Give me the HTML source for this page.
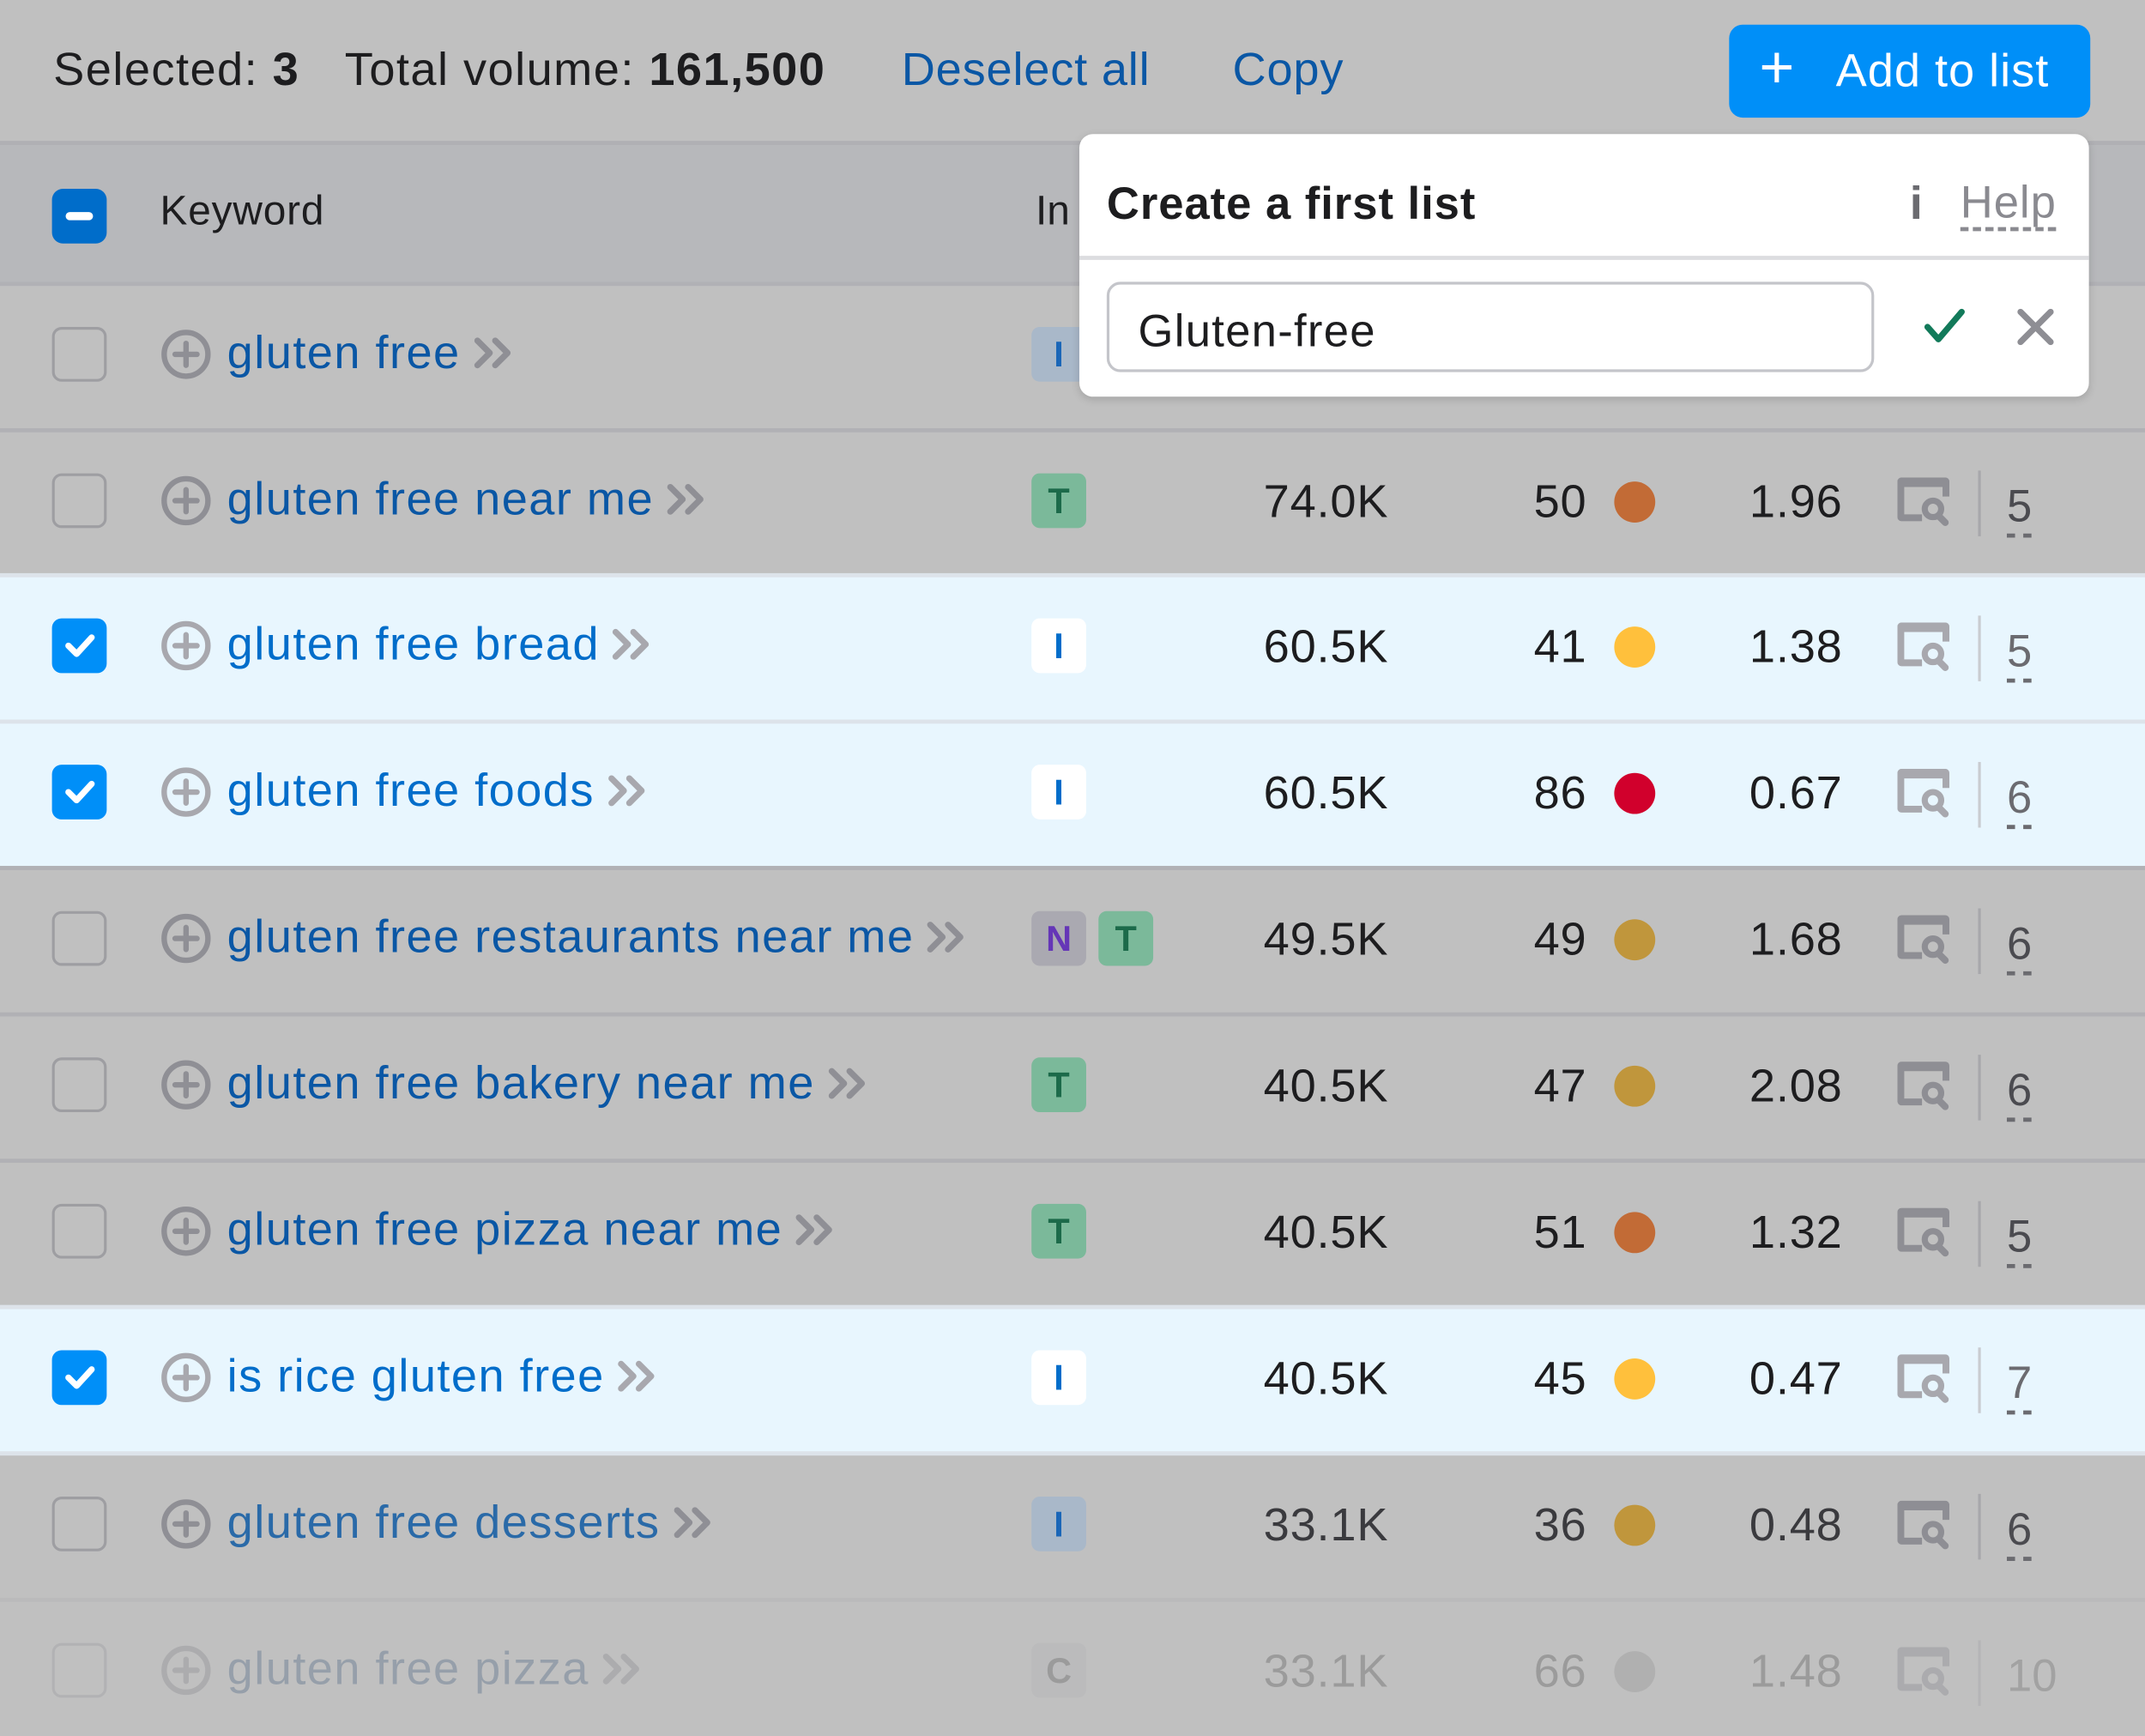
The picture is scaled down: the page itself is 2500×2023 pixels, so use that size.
<!DOCTYPE html>
<html><head><meta charset="utf-8"><style>
*{margin:0;padding:0;box-sizing:border-box}
html,body{width:2500px;height:2023px;overflow:hidden;background:#c0c0c0}
#w{position:absolute;left:0;top:0;width:1568px;height:1269px;transform:scale(1.59439,1.59417);transform-origin:0 0;background:#c0c0c0;font-family:"Liberation Sans",sans-serif;overflow:hidden}
.a{position:absolute}
.row{position:absolute;left:0;width:1568px;height:107px;border-top:3px solid #b1b1b5}
.sel{background:#e8f6fe;border-top:3px solid #dde3ea}
.cb{position:absolute;left:38px;top:30px;width:40px;height:40px;border:2px solid #9e9ea2;border-radius:7px}
.sel .cb{background:#008ff8;border-color:#008ff8}
.plus{position:absolute;left:117px;top:31px}
.kw{position:absolute;left:166px;top:30px;font-size:34px;letter-spacing:0.9px;color:#0a57a5;white-space:nowrap}
.sel .kw{color:#006dca}
.kw svg{margin-left:8px;vertical-align:-2px}
.bd{position:absolute;top:30px;width:40px;height:40px;border-radius:6px;font-size:26px;font-weight:bold;text-align:center;line-height:40px}
.T{background:#7bb99a;color:#1c6a4a}
.N{background:#aaa9b1;color:#6536b7}
.I{background:#a9b8c9;color:#1a66b8}
.sel .I{background:#fff;color:#006dca}
.vol,.kd,.cpc{position:absolute;top:32px;font-size:34px;letter-spacing:0.5px;color:#1d1d1f;text-align:right}
.vol{left:880px;width:135px}.kd{left:1060px;width:100px}.cpc{left:1230px;width:117px}
.dot{position:absolute;left:1180px;top:36px;width:30px;height:30px;border-radius:50%}
.serp{position:absolute;left:1387px;top:33px}
.sep{position:absolute;left:1446px;top:28px;width:2px;height:48px;background:#a7a7ab}
.sel .sep{background:#c9ccd1}
.num{position:absolute;left:1467px;top:36px;font-size:33px;color:#4b4b50;border-bottom:3px dashed #6b6b70;line-height:36px;padding-bottom:2px}
</style></head><body><div id="w">

<div class="a" style="left:39px;top:32px;font-size:34px;letter-spacing:0.9px;color:#1d1d1f;white-space:nowrap">Selected: <b>3</b></div>
<div class="a" style="left:252px;top:32px;font-size:34px;letter-spacing:0.9px;color:#1d1d1f;white-space:nowrap">Total volume: <b>161,500</b></div>
<div class="a" style="left:659px;top:32px;font-size:34px;letter-spacing:0.5px;color:#0a57a5">Deselect all</div>
<div class="a" style="left:901px;top:32px;font-size:34px;letter-spacing:0.5px;color:#0a57a5">Copy</div>
<div class="a" style="left:1264px;top:18px;width:264px;height:68px;background:#008ff8;border-radius:10px;color:#fff;font-size:34px;line-height:68px;white-space:nowrap"><span style="position:absolute;left:22px;top:-2px;font-size:44px">+</span><span style="position:absolute;left:78px;letter-spacing:0.6px">Add to list</span></div>

<div class="a" style="left:0;top:103px;width:1568px;height:104px;background:#b7b8bb;border-top:3px solid #b0b0b4"></div>
<div class="a" style="left:38px;top:138px;width:40px;height:40px;background:#006dca;border-radius:8px"><div class="a" style="left:10px;top:17px;width:20px;height:6px;background:#fff;border-radius:3px"></div></div>
<div class="a" style="left:117px;top:138px;font-size:30px;letter-spacing:0.5px;color:#1d1d1f">Keyword</div>
<div class="a" style="left:757px;top:138px;font-size:30px;color:#1d1d1f">In</div>

<!-- rows -->
<div class="row" style="top:206px"><div class="cb"></div><svg class="plus" width="38" height="38" viewBox="0 0 38 38"><circle cx="19" cy="19" r="16" fill="none" stroke="#8f8f95" stroke-width="4"/><path d="M19 11v16M11 19h16" stroke="#8f8f95" stroke-width="4" stroke-linecap="round"/></svg><div class="kw">gluten free<svg width="32" height="26" viewBox="0 0 32 26"><path d="M4 4l9 9-9 9M17 4l9 9-9 9" fill="none" stroke="#8f8f95" stroke-width="4.5" stroke-linecap="round" stroke-linejoin="round"/></svg></div><div class="bd I" style="left:754px">I</div></div>

<div class="row" style="top:313px"><div class="cb"></div><svg class="plus" width="38" height="38" viewBox="0 0 38 38"><circle cx="19" cy="19" r="16" fill="none" stroke="#8f8f95" stroke-width="4"/><path d="M19 11v16M11 19h16" stroke="#8f8f95" stroke-width="4" stroke-linecap="round"/></svg><div class="kw">gluten free near me<svg width="32" height="26" viewBox="0 0 32 26"><path d="M4 4l9 9-9 9M17 4l9 9-9 9" fill="none" stroke="#8f8f95" stroke-width="4.5" stroke-linecap="round" stroke-linejoin="round"/></svg></div><div class="bd T" style="left:754px">T</div><div class="vol">74.0K</div><div class="kd">50</div><div class="dot" style="background:#c26b36"></div><div class="cpc">1.96</div><svg class="serp" width="40" height="36" viewBox="0 0 40 36"><path d="M3 0h32a3 3 0 0 1 3 3v11h-5V7H5v20h13v5H3a3 3 0 0 1-3-3V3a3 3 0 0 1 3-3z" fill="#8e8e94"/><circle cx="26" cy="23" r="6" fill="none" stroke="#8e8e94" stroke-width="4.5"/><path d="M30 28l5 5" stroke="#8e8e94" stroke-width="5" stroke-linecap="round"/></svg><div class="sep"></div><div class="num">5</div></div>

<div class="row sel" style="top:419px"><div class="cb"><svg width="36" height="36" viewBox="0 0 36 36" style="position:absolute;left:0;top:0"><path d="M10 18l6 6 11-12" fill="none" stroke="#fff" stroke-width="4.5" stroke-linecap="round" stroke-linejoin="round"/></svg></div><svg class="plus" width="38" height="38" viewBox="0 0 38 38"><circle cx="19" cy="19" r="16" fill="none" stroke="#a8a8ae" stroke-width="4"/><path d="M19 11v16M11 19h16" stroke="#a8a8ae" stroke-width="4" stroke-linecap="round"/></svg><div class="kw">gluten free bread<svg width="32" height="26" viewBox="0 0 32 26"><path d="M4 4l9 9-9 9M17 4l9 9-9 9" fill="none" stroke="#a8a8ae" stroke-width="4.5" stroke-linecap="round" stroke-linejoin="round"/></svg></div><div class="bd I" style="left:754px">I</div><div class="vol">60.5K</div><div class="kd">41</div><div class="dot" style="background:#ffc03c"></div><div class="cpc">1.38</div><svg class="serp" width="40" height="36" viewBox="0 0 40 36"><path d="M3 0h32a3 3 0 0 1 3 3v11h-5V7H5v20h13v5H3a3 3 0 0 1-3-3V3a3 3 0 0 1 3-3z" fill="#a8a8ae"/><circle cx="26" cy="23" r="6" fill="none" stroke="#a8a8ae" stroke-width="4.5"/><path d="M30 28l5 5" stroke="#a8a8ae" stroke-width="5" stroke-linecap="round"/></svg><div class="sep"></div><div class="num" style="color:#6b6b70">5</div></div>

<div class="row sel" style="top:526px"><div class="cb"><svg width="36" height="36" viewBox="0 0 36 36" style="position:absolute;left:0;top:0"><path d="M10 18l6 6 11-12" fill="none" stroke="#fff" stroke-width="4.5" stroke-linecap="round" stroke-linejoin="round"/></svg></div><svg class="plus" width="38" height="38" viewBox="0 0 38 38"><circle cx="19" cy="19" r="16" fill="none" stroke="#a8a8ae" stroke-width="4"/><path d="M19 11v16M11 19h16" stroke="#a8a8ae" stroke-width="4" stroke-linecap="round"/></svg><div class="kw">gluten free foods<svg width="32" height="26" viewBox="0 0 32 26"><path d="M4 4l9 9-9 9M17 4l9 9-9 9" fill="none" stroke="#a8a8ae" stroke-width="4.5" stroke-linecap="round" stroke-linejoin="round"/></svg></div><div class="bd I" style="left:754px">I</div><div class="vol">60.5K</div><div class="kd">86</div><div class="dot" style="background:#d1002c"></div><div class="cpc">0.67</div><svg class="serp" width="40" height="36" viewBox="0 0 40 36"><path d="M3 0h32a3 3 0 0 1 3 3v11h-5V7H5v20h13v5H3a3 3 0 0 1-3-3V3a3 3 0 0 1 3-3z" fill="#a8a8ae"/><circle cx="26" cy="23" r="6" fill="none" stroke="#a8a8ae" stroke-width="4.5"/><path d="M30 28l5 5" stroke="#a8a8ae" stroke-width="5" stroke-linecap="round"/></svg><div class="sep"></div><div class="num" style="color:#6b6b70">6</div></div>

<div class="row" style="top:633px"><div class="cb"></div><svg class="plus" width="38" height="38" viewBox="0 0 38 38"><circle cx="19" cy="19" r="16" fill="none" stroke="#8f8f95" stroke-width="4"/><path d="M19 11v16M11 19h16" stroke="#8f8f95" stroke-width="4" stroke-linecap="round"/></svg><div class="kw">gluten free restaurants near me<svg width="32" height="26" viewBox="0 0 32 26"><path d="M4 4l9 9-9 9M17 4l9 9-9 9" fill="none" stroke="#8f8f95" stroke-width="4.5" stroke-linecap="round" stroke-linejoin="round"/></svg></div><div class="bd N" style="left:754px">N</div><div class="bd T" style="left:803px">T</div><div class="vol">49.5K</div><div class="kd">49</div><div class="dot" style="background:#c0963c"></div><div class="cpc">1.68</div><svg class="serp" width="40" height="36" viewBox="0 0 40 36"><path d="M3 0h32a3 3 0 0 1 3 3v11h-5V7H5v20h13v5H3a3 3 0 0 1-3-3V3a3 3 0 0 1 3-3z" fill="#8e8e94"/><circle cx="26" cy="23" r="6" fill="none" stroke="#8e8e94" stroke-width="4.5"/><path d="M30 28l5 5" stroke="#8e8e94" stroke-width="5" stroke-linecap="round"/></svg><div class="sep"></div><div class="num">6</div></div>

<div class="row" style="top:740px"><div class="cb"></div><svg class="plus" width="38" height="38" viewBox="0 0 38 38"><circle cx="19" cy="19" r="16" fill="none" stroke="#8f8f95" stroke-width="4"/><path d="M19 11v16M11 19h16" stroke="#8f8f95" stroke-width="4" stroke-linecap="round"/></svg><div class="kw">gluten free bakery near me<svg width="32" height="26" viewBox="0 0 32 26"><path d="M4 4l9 9-9 9M17 4l9 9-9 9" fill="none" stroke="#8f8f95" stroke-width="4.5" stroke-linecap="round" stroke-linejoin="round"/></svg></div><div class="bd T" style="left:754px">T</div><div class="vol">40.5K</div><div class="kd">47</div><div class="dot" style="background:#c0963c"></div><div class="cpc">2.08</div><svg class="serp" width="40" height="36" viewBox="0 0 40 36"><path d="M3 0h32a3 3 0 0 1 3 3v11h-5V7H5v20h13v5H3a3 3 0 0 1-3-3V3a3 3 0 0 1 3-3z" fill="#8e8e94"/><circle cx="26" cy="23" r="6" fill="none" stroke="#8e8e94" stroke-width="4.5"/><path d="M30 28l5 5" stroke="#8e8e94" stroke-width="5" stroke-linecap="round"/></svg><div class="sep"></div><div class="num">6</div></div>

<div class="row" style="top:847px"><div class="cb"></div><svg class="plus" width="38" height="38" viewBox="0 0 38 38"><circle cx="19" cy="19" r="16" fill="none" stroke="#8f8f95" stroke-width="4"/><path d="M19 11v16M11 19h16" stroke="#8f8f95" stroke-width="4" stroke-linecap="round"/></svg><div class="kw">gluten free pizza near me<svg width="32" height="26" viewBox="0 0 32 26"><path d="M4 4l9 9-9 9M17 4l9 9-9 9" fill="none" stroke="#8f8f95" stroke-width="4.5" stroke-linecap="round" stroke-linejoin="round"/></svg></div><div class="bd T" style="left:754px">T</div><div class="vol">40.5K</div><div class="kd">51</div><div class="dot" style="background:#c26b36"></div><div class="cpc">1.32</div><svg class="serp" width="40" height="36" viewBox="0 0 40 36"><path d="M3 0h32a3 3 0 0 1 3 3v11h-5V7H5v20h13v5H3a3 3 0 0 1-3-3V3a3 3 0 0 1 3-3z" fill="#8e8e94"/><circle cx="26" cy="23" r="6" fill="none" stroke="#8e8e94" stroke-width="4.5"/><path d="M30 28l5 5" stroke="#8e8e94" stroke-width="5" stroke-linecap="round"/></svg><div class="sep"></div><div class="num">5</div></div>

<div class="row sel" style="top:954px"><div class="cb"><svg width="36" height="36" viewBox="0 0 36 36" style="position:absolute;left:0;top:0"><path d="M10 18l6 6 11-12" fill="none" stroke="#fff" stroke-width="4.5" stroke-linecap="round" stroke-linejoin="round"/></svg></div><svg class="plus" width="38" height="38" viewBox="0 0 38 38"><circle cx="19" cy="19" r="16" fill="none" stroke="#a8a8ae" stroke-width="4"/><path d="M19 11v16M11 19h16" stroke="#a8a8ae" stroke-width="4" stroke-linecap="round"/></svg><div class="kw">is rice gluten free<svg width="32" height="26" viewBox="0 0 32 26"><path d="M4 4l9 9-9 9M17 4l9 9-9 9" fill="none" stroke="#a8a8ae" stroke-width="4.5" stroke-linecap="round" stroke-linejoin="round"/></svg></div><div class="bd I" style="left:754px">I</div><div class="vol">40.5K</div><div class="kd">45</div><div class="dot" style="background:#ffc03c"></div><div class="cpc">0.47</div><svg class="serp" width="40" height="36" viewBox="0 0 40 36"><path d="M3 0h32a3 3 0 0 1 3 3v11h-5V7H5v20h13v5H3a3 3 0 0 1-3-3V3a3 3 0 0 1 3-3z" fill="#a8a8ae"/><circle cx="26" cy="23" r="6" fill="none" stroke="#a8a8ae" stroke-width="4.5"/><path d="M30 28l5 5" stroke="#a8a8ae" stroke-width="5" stroke-linecap="round"/></svg><div class="sep"></div><div class="num" style="color:#6b6b70">7</div></div>

<div class="row" style="top:1061px;border-top-color:#dde3ea"><div class="cb"></div><svg class="plus" width="38" height="38" viewBox="0 0 38 38"><circle cx="19" cy="19" r="16" fill="none" stroke="#8f8f95" stroke-width="4"/><path d="M19 11v16M11 19h16" stroke="#8f8f95" stroke-width="4" stroke-linecap="round"/></svg><div class="kw" style="color:#2a6aa8">gluten free desserts<svg width="32" height="26" viewBox="0 0 32 26"><path d="M4 4l9 9-9 9M17 4l9 9-9 9" fill="none" stroke="#8f8f95" stroke-width="4.5" stroke-linecap="round" stroke-linejoin="round"/></svg></div><div class="bd I" style="left:754px">I</div><div class="vol" style="color:#3a3a3e">33.1K</div><div class="kd" style="color:#3a3a3e">36</div><div class="dot" style="background:#c0963c"></div><div class="cpc" style="color:#3a3a3e">0.48</div><svg class="serp" width="40" height="36" viewBox="0 0 40 36"><path d="M3 0h32a3 3 0 0 1 3 3v11h-5V7H5v20h13v5H3a3 3 0 0 1-3-3V3a3 3 0 0 1 3-3z" fill="#8e8e94"/><circle cx="26" cy="23" r="6" fill="none" stroke="#8e8e94" stroke-width="4.5"/><path d="M30 28l5 5" stroke="#8e8e94" stroke-width="5" stroke-linecap="round"/></svg><div class="sep"></div><div class="num">6</div></div>

<div class="row" style="top:1168px;opacity:.4"><div class="cb"></div><svg class="plus" width="38" height="38" viewBox="0 0 38 38"><circle cx="19" cy="19" r="16" fill="none" stroke="#8f8f95" stroke-width="4"/><path d="M19 11v16M11 19h16" stroke="#8f8f95" stroke-width="4" stroke-linecap="round"/></svg><div class="kw" style="color:#5a6f8a">gluten free pizza<svg width="32" height="26" viewBox="0 0 32 26"><path d="M4 4l9 9-9 9M17 4l9 9-9 9" fill="none" stroke="#8f8f95" stroke-width="4.5" stroke-linecap="round" stroke-linejoin="round"/></svg></div><div class="bd" style="left:754px;color:#666;background:#b4b4b8">C</div><div class="vol" style="color:#666">33.1K</div><div class="kd" style="color:#666">66</div><div class="dot" style="background:#999"></div><div class="cpc" style="color:#666">1.48</div><svg class="serp" width="40" height="36" viewBox="0 0 40 36"><path d="M3 0h32a3 3 0 0 1 3 3v11h-5V7H5v20h13v5H3a3 3 0 0 1-3-3V3a3 3 0 0 1 3-3z" fill="#8e8e94"/><circle cx="26" cy="23" r="6" fill="none" stroke="#8e8e94" stroke-width="4.5"/><path d="M30 28l5 5" stroke="#8e8e94" stroke-width="5" stroke-linecap="round"/></svg><div class="sep"></div><div class="num" style="color:#777;border:none">10</div></div>

<!-- popup -->
<div class="a" style="left:789px;top:98px;width:738px;height:192px;background:#fff;border-radius:10px;box-shadow:0 2px 6px rgba(0,0,0,.15)">
  <div class="a" style="left:20px;top:32px;font-size:33px;letter-spacing:0.6px;font-weight:bold;color:#1d1d1f;white-space:nowrap">Create a first list</div>
  <div class="a" style="left:607px;top:32px;font-size:34px;font-weight:bold;color:#6b6b70">i</div>
  <div class="a" style="left:644px;top:32px;font-size:33px;letter-spacing:0.6px;color:#8a8a90;border-bottom:3px dashed #8a8a90;line-height:36px">Help</div>
  <div class="a" style="left:0;top:89px;width:738px;height:3px;background:#dcdde0"></div>
  <div class="a" style="left:20px;top:108px;width:561px;height:66px;border:2px solid #c4c5ca;border-radius:10px"><div class="a" style="left:21px;top:15px;font-size:33px;letter-spacing:0.8px;color:#1d1d1f">Gluten-free</div></div>
  <svg class="a" style="left:616px;top:126px" width="34" height="30" viewBox="0 0 34 30"><path d="M4 15l8 9L29 4" fill="none" stroke="#127a5a" stroke-width="4.5" stroke-linecap="round" stroke-linejoin="round"/></svg>
  <svg class="a" style="left:684px;top:126px" width="30" height="30" viewBox="0 0 30 30"><path d="M4 4l22 22M26 4L4 26" stroke="#8e8e94" stroke-width="4.5" stroke-linecap="round"/></svg>
</div>

</div></body></html>
